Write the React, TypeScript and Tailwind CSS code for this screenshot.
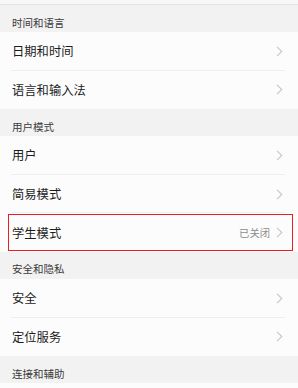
import React from "react";

const font = { fontFamily: '"Noto Sans CJK SC", "Noto Sans", sans-serif' };

function Chevron() {
  return (
    <svg width="7" height="11" viewBox="0 0 7 11" className="shrink-0">
      <path d="M1 0.8 L5.8 5.5 L1 10.2" fill="none" stroke="#c6c6c6" strokeWidth="1.1" />
    </svg>
  );
}

function Header({ title }: { title: string }) {
  return (
    <div className="h-[27px] flex items-end pb-[4px] pl-[12px] bg-[#f2f2f2]">
      <span className="text-[10.5px] leading-none text-[#3a3a3a]">{title}</span>
    </div>
  );
}

function Row({
  label,
  value,
  divider,
  highlight,
}: {
  label: string;
  value?: string;
  divider?: boolean;
  highlight?: boolean;
}) {
  return (
    <div className="relative h-[38.6px] bg-[#fcfcfc] flex items-center pl-[12px] pr-[15px]">
      <span className="flex-1 text-[12.3px] leading-none text-[#1c1c1c]">{label}</span>
      {value && (
        <span className="text-[10.3px] leading-none text-[#8c8c8c] mr-[6px]">{value}</span>
      )}
      <Chevron />
      {divider && (
        <div className="absolute left-[11px] right-[13px] bottom-0 h-px bg-[#efefef]" />
      )}
      {highlight && (
        <div className="absolute left-[8px] right-[5px] top-[0.6px] bottom-[1px] border border-[#ea1c24]" />
      )}
    </div>
  );
}

export default function App() {
  return (
    <div className="w-[298px] h-[388px] overflow-hidden bg-[#f2f2f2]" style={font}>
      <div className="h-[4px] bg-[#f8f8f8]" />
      <div className="h-px bg-[#e2e2e2]" />
      <Header title="时间和语言" />
      <Row label="日期和时间" divider />
      <Row label="语言和输入法" />
      <Header title="用户模式" />
      <Row label="用户" divider />
      <Row label="简易模式" divider />
      <Row label="学生模式" value="已关闭" highlight />
      <Header title="安全和隐私" />
      <Row label="安全" divider />
      <Row label="定位服务" />
      <Header title="连接和辅助" />
      <Row label="" />
    </div>
  );
}
